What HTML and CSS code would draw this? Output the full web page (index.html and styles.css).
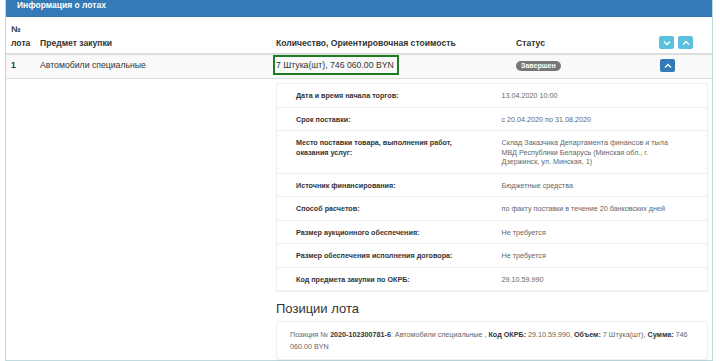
FILE: index.html
```html
<!DOCTYPE html>
<html lang="ru">
<head>
    <meta charset="UTF-8">
    <title>Информация о лотах</title>
    <link rel="stylesheet" href="styles.css">
</head>
<body>

    <div class="panel">
        <div class="panel-heading">Информация о лотах</div>

        <table class="lots">
            <colgroup>
                <col class="w-num">
                <col class="w-name">
                <col class="w-qty">
                <col class="w-status">
                <col class="w-btns">
            </colgroup>
            <thead>
                <tr>
                    <th>№<br>лота</th>
                    <th>Предмет закупки</th>
                    <th>Количество, Ориентировочная стоимость</th>
                    <th>Статус</th>
                    <th class="btns">
                        <button class="btn btn-info" title="Развернуть все">
                            <svg width="8" height="6" viewBox="0 0 8 6"><polyline points="1,1.5 4,4.5 7,1.5" /></svg>
                        </button>
                        <button class="btn btn-info" title="Свернуть все">
                            <svg width="8" height="6" viewBox="0 0 8 6"><polyline points="1,4.5 4,1.5 7,4.5" /></svg>
                        </button>
                    </th>
                </tr>
            </thead>
            <tbody>
                <tr class="lot-row">
                    <td class="num">1</td>
                    <td>Автомобили специальные</td>
                    <td><span class="highlight">7 Штука(шт), 746 060.00 BYN</span></td>
                    <td><span class="badge">Завершен</span></td>
                    <td class="btns">
                        <button class="btn btn-primary" title="Свернуть">
                            <svg width="8" height="6" viewBox="0 0 8 6"><polyline points="1,4.5 4,1.5 7,4.5" /></svg>
                        </button>
                    </td>
                </tr>
                <tr class="detail-row">
                    <td></td>
                    <td></td>
                    <td colspan="3" class="detail-cell">
                        <table class="details">
                            <tr><th>Дата и время начала торгов:</th><td>13.04.2020 10:00</td></tr>
                            <tr><th>Срок поставки:</th><td>с 20.04.2020 по 31.08.2020</td></tr>
                            <tr><th>Место поставки товара, выполнения работ, оказания услуг:</th><td>Склад Заказчика Департамента финансов и тыла МВД Республики Беларусь (Минская обл., г. Дзержинск, ул. Минская, 1)</td></tr>
                            <tr><th>Источник финансирования:</th><td>Бюджетные средства</td></tr>
                            <tr><th>Способ расчетов:</th><td>по факту поставки в течение 20 банковских дней</td></tr>
                            <tr><th>Размер аукционного обеспечения:</th><td>Не требуется</td></tr>
                            <tr><th>Размер обеспечения исполнения договора:</th><td>Не требуется</td></tr>
                            <tr><th>Код предмета закупки по ОКРБ:</th><td>29.10.59.990</td></tr>
                        </table>

                        <h4 class="positions-title">Позиции лота</h4>
                        <div class="position">
                            Позиция № <b>2020-102300781-6</b>: Автомобили специальные , <b>Код ОКРБ:</b> 29.10.59.990, <b>Объем:</b> 7 Штука(шт), <b>Сумма:</b> 746 060.00 BYN
                        </div>
                    </td>
                </tr>
            </tbody>
        </table>
    </div>

</body>
</html>
```

FILE: styles.css
```css
* {
    margin: 0;
    padding: 0;
    box-sizing: border-box;
}

body {
    font-family: "Liberation Sans", Arial, sans-serif;
    font-size: 8.7px;
    color: #333;
    background: #fff;
    padding-left: 5px;
    overflow: hidden;
}

.panel {
    width: 708px;
    border: 1px solid #bfd9dd;
    border-top: none;
}

.panel-heading {
    background-color: #337ab7;
    color: #fff;
    font-weight: bold;
    font-size: 8.5px;
    line-height: 11px;
    padding: 0 10px 6px 11px;
    height: 17px;
}

.lots {
    width: 100%;
    border-collapse: collapse;
    table-layout: fixed;
}

.w-num { width: 29px; }
.w-name { width: 236px; }
.w-qty { width: 240px; }
.w-status { width: 145px; }
.w-btns { width: 56px; }

.lots thead th {
    text-align: left;
    vertical-align: bottom;
    font-weight: bold;
    font-size: 8.6px;
    line-height: 14px;
    padding: 5px 5px 3px;
    border-bottom: 2px solid #ddd;
}

.lots thead th.btns {
    padding: 0 4px 4px 3px;
}

.lot-row td {
    background-color: #f9f9f9;
    line-height: 14px;
    padding: 0 5px 3px;
    vertical-align: middle;
}

.lot-row td.num {
    font-weight: bold;
}

.lot-row td.btns {
    padding-left: 4px;
}

.highlight {
    display: inline-block;
    border: 2px solid #1e7d22;
    padding: 1px 3px 1px 1px;
    margin-left: -3px;
}

.badge {
    display: inline-block;
    background-color: #777;
    color: #fff;
    font-size: 7px;
    font-weight: bold;
    line-height: 10px;
    padding: 0 5px;
    border-radius: 5px;
}

.btn {
    display: inline-flex;
    align-items: center;
    justify-content: center;
    width: 15px;
    height: 13px;
    border: none;
    border-radius: 2px;
    margin-right: 2px;
    vertical-align: middle;
}

.btn svg polyline {
    fill: none;
    stroke: #fff;
    stroke-width: 1.4;
}

.btn-info {
    background-color: #5bc0de;
}

.btn-primary {
    background-color: #337ab7;
}

.detail-row > td {
    border-top: 1px solid #ddd;
}

.detail-cell {
    padding: 4px 4px 0 5px;
}

.details {
    width: 100%;
    border-collapse: collapse;
    border: 1px solid #eee;
    box-shadow: 0 1px 1px rgba(0, 0, 0, 0.04);
    font-size: 7.2px;
    line-height: 9.5px;
}

.details tr {
    border-top: 1px solid #eee;
}

.details th,
.details td {
    text-align: left;
    vertical-align: top;
    padding: 7px 24px 6px 19px;
}

.details th {
    width: 206px;
    font-weight: bold;
    color: #333;
}

.details td {
    color: #666;
}

.positions-title {
    font-size: 13px;
    font-weight: normal;
    line-height: 15px;
    margin: 10px 0 5px;
    color: #333;
}

.position {
    border: 1px solid #eee;
    border-radius: 3px;
    box-shadow: 0 1px 1px rgba(0, 0, 0, 0.04);
    padding: 7px 13px;
    font-size: 7.2px;
    line-height: 11.6px;
    color: #666;
}

.position b {
    color: #333;
}
```
